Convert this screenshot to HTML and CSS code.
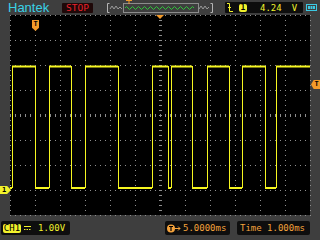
FILE: index.html
```html
<!DOCTYPE html>
<html lang="en">
<head>
	<meta charset="UTF-8">
	<title>Hantek</title>
	<link rel="stylesheet" href="styles.css">
</head>
<body>
	<div class="scope">
		<!-- 顶部状态栏 -->
		<header class="bar top">
			<span class="brand">Hantek</span>
			<span class="state">STOP</span>
			<svg class="overview" width="106" height="14" viewBox="0 0 106 14">
				<path d="M2.5 3.5H0.5V12.5H2.5" fill="none" stroke="#b4b4b4"/>
				<path d="M3 9 L5 6 L7 9 L9 6 L11 9 L13 7 L15 9" fill="none" stroke="#9a9a9a"/>
				<rect x="16.5" y="3.5" width="75" height="9" fill="none" stroke="#8c8c8c"/>
				<path d="M18 8 q1.5 -3 3 0 t3 0 t3 0 t3 0 t3 0 t3 0 t3 0 t3 0 t3 0 t3 0 t3 0 t3 0 t3 0 t3 0 t3 0 t3 0 t3 0 t3 0 t3 0 t3 0 t3 0 t3 0 t3 0" fill="none" stroke="#2fc43a"/>
				<path d="M92 9 L94 6 L96 9 L98 6 L100 9 L102 7" fill="none" stroke="#9a9a9a"/>
				<path d="M103.5 3.5H105.5V12.5H103.5" fill="none" stroke="#b4b4b4"/>
				<path d="M19 0.5H25 M22 0V4" stroke="#f39a2a"/>
			</svg>
			<div class="trig-box">
				<svg class="edge" width="6" height="9" viewBox="0 0 6 9">
					<path d="M0 0.5H2.5V8.5H6" fill="none" stroke="#f2f22c"/>
					<path d="M1 4L2.5 5.5L4 4" fill="none" stroke="#f2f22c"/>
				</svg>
				<span class="ch-badge">1</span>
				<span class="level">4.24</span>
				<span class="unit">V</span>
			</div>
			<svg class="battery" width="11" height="7" viewBox="0 0 11 7">
				<rect x="0.5" y="0.5" width="10" height="6" fill="none" stroke="#3cc8e2"/>
				<rect x="2" y="2" width="2" height="3" fill="#3cc8e2"/>
				<rect x="4.5" y="2" width="2" height="3" fill="#3cc8e2"/>
				<rect x="7" y="2" width="2" height="3" fill="#3cc8e2"/>
			</svg>
		</header>

		<!-- 波形显示区 -->
		<main class="screen">
			<div class="grid-wrap">
				<svg class="grid" width="300" height="200" viewBox="0 0 300 200">
					<path class="div-lines" d="M0.5 0V200 M25.5 0V200 M50.5 0V200 M75.5 0V200 M100.5 0V200 M125.5 0V200 M175.5 0V200 M200.5 0V200 M225.5 0V200 M250.5 0V200 M275.5 0V200 M300.5 0V201
						M0 0.5H300 M0 25.5H300 M0 50.5H300 M0 75.5H300 M0 125.5H300 M0 150.5H300 M0 175.5H300 M0 200.5H301"/>
					<path class="center-lines" d="M150.5 0V200 M0 100.5H300"/>
					<path class="wave-flat" d="M2 51.5H25 M39 51.5H61 M75 51.5H108 M142 51.5H158 M161 51.5H182 M197 51.5H219 M232 51.5H255 M266 51.5H300
						M0 173H2 M25 173H39 M61 173H75 M108 173H142 M158 173H161 M182 173H197 M219 173H232 M255 173H266"/>
					<path class="wave-edge" d="M2.5 51V173 M25.5 51V173 M39.5 51V173 M61.5 51V173 M75.5 51V173 M108.5 51V173 M142.5 51V173 M158.5 51V173 M161.5 51V173 M182.5 51V173 M197.5 51V173 M219.5 51V173 M232.5 51V173 M255.5 51V173 M266.5 51V173"/>
				</svg>
				<span class="marker trig-time">T</span>
				<span class="marker pos-mark"></span>
				<span class="marker trig-level">T</span>
				<span class="marker ch-ground">1</span>
			</div>
		</main>

		<!-- 底部读数 -->
		<footer class="bar bottom">
			<div class="readout ch">
				<span class="ch-tag">CH1</span>
				<svg class="dc" width="7" height="5" viewBox="0 0 7 5">
					<path d="M0 0.5H7" stroke="#f2f22c"/>
					<path d="M0 3.5H7" stroke="#f2f22c" stroke-dasharray="1.5 1"/>
				</svg>
				<span class="volts">1.00V</span>
			</div>
			<div class="readout pos">
				<svg class="t-arrow" width="14" height="9" viewBox="0 0 14 9">
					<circle cx="4" cy="4.5" r="4" fill="#f5a33c"/>
					<path d="M2 2.5H6 M4 2.5V7" stroke="#000" stroke-width="1.2"/>
					<path d="M8 4.5H13 M11 2.5L13 4.5L11 6.5" fill="none" stroke="#f5a33c"/>
				</svg>
				<span>5.0000ms</span>
			</div>
			<div class="readout time">Time 1.000ms</div>
		</footer>
	</div>
</body>
</html>
```

FILE: styles.css
```css
body {
	margin: 0;
	padding: 0;
	background-color: #3e3e3e;
}

.scope {
	width: 320px;
	height: 240px;
	overflow: hidden;
	background-color: #3e3e3e;
	font-family: "DejaVu Sans Mono", monospace;
}

/*顶部栏*/
.bar {
	display: flex;
	align-items: flex-start;
}
.top {
	height: 15px;
	padding-left: 8px;
}
.brand {
	width: 54px;
	font-family: "Liberation Sans", Arial, sans-serif;
	font-size: 13px;
	line-height: 15px;
	color: #3ad2e6;
}
.state {
	margin-top: 3px;
	width: 31px;
	height: 10px;
	line-height: 10px;
	text-align: center;
	font-size: 9.5px;
	color: #e8222c;
	background-color: #1e0808;
	border-radius: 1px;
}
.overview {
	margin-left: 14px;
	display: block;
}
.trig-box {
	margin-top: 2px;
	margin-left: 12px;
	width: 78px;
	height: 11px;
	display: flex;
	align-items: center;
	background-color: #0d0d0d;
	border-radius: 1px;
	color: #f2f22c;
	font-size: 9px;
}
.edge {
	margin-left: 2px;
	display: block;
}
.ch-badge {
	margin-left: 6px;
	width: 8px;
	height: 8px;
	line-height: 8px;
	text-align: center;
	font-size: 8px;
	font-weight: bold;
	color: #000;
	background-color: #f2f22c;
	border-radius: 2px;
}
.level {
	margin-left: 13px;
}
.unit {
	margin-left: 10px;
}
.battery {
	margin-top: 4px;
	margin-left: 3px;
	display: block;
}

/*网格区*/
.screen {
	height: 200px;
	padding-left: 10px;
	display: flex;
}
.grid-wrap {
	position: relative;
	width: 300px;
	height: 200px;
	background-color: #000;
}
.grid {
	display: block;
	overflow: visible;
}
.div-lines {
	fill: none;
	stroke: #8e8e8e;
	stroke-width: 1;
	stroke-dasharray: 1 4;
}
.center-lines {
	fill: none;
	stroke: #8e8e8e;
	stroke-width: 3;
	stroke-dasharray: 1 4;
}
.wave-flat {
	fill: none;
	stroke: #f6f620;
	stroke-width: 2;
}
.wave-edge {
	fill: none;
	stroke: #f6f620;
	stroke-width: 1;
}

/*标记*/
.marker {
	position: absolute;
	font-size: 7px;
	font-weight: bold;
	color: #000;
	text-align: center;
}
.trig-time {
	left: 22px;
	top: 5px;
	width: 7px;
	height: 11px;
	line-height: 8px;
	background-color: #f39a2a;
	clip-path: polygon(0 0, 100% 0, 100% 70%, 50% 100%, 0 70%);
}
.pos-mark {
	left: 146px;
	top: 0;
	width: 8px;
	height: 4px;
	background-color: #f39a2a;
	clip-path: polygon(0 0, 100% 0, 50% 100%);
}
.trig-level {
	left: 301px;
	top: 65px;
	width: 9px;
	height: 9px;
	line-height: 9px;
	padding-left: 2px;
	box-sizing: border-box;
	background-color: #f39a2a;
	clip-path: polygon(0 50%, 30% 0, 100% 0, 100% 100%, 30% 100%);
}
.ch-ground {
	left: -10px;
	top: 171px;
	width: 11px;
	height: 8px;
	line-height: 8px;
	padding-right: 3px;
	box-sizing: border-box;
	background-color: #f2f22c;
	clip-path: polygon(0 0, 65% 0, 100% 50%, 65% 100%, 0 100%);
}

/*底部读数*/
.bottom {
	height: 25px;
	padding-top: 6px;
	box-sizing: border-box;
}
.readout {
	height: 14px;
	display: flex;
	align-items: center;
	background-color: #0e0e0e;
	border-radius: 2px;
	font-size: 9px;
	color: #f5a33c;
}
.ch {
	margin-left: 1px;
	width: 69px;
	color: #f2f22c;
}
.ch-tag {
	margin-left: 2px;
	width: 18px;
	height: 9px;
	line-height: 9px;
	text-align: center;
	color: #000;
	background-color: #f2f22c;
	border-radius: 2px;
}
.dc {
	margin-left: 3px;
	display: block;
}
.volts {
	margin-left: 7px;
}
.pos {
	margin-left: 95px;
	width: 65px;
}
.t-arrow {
	margin-left: 2px;
	margin-right: 2px;
	display: block;
}
.time {
	margin-left: 7px;
	width: 73px;
	padding-left: 3px;
	box-sizing: border-box;
}
```
